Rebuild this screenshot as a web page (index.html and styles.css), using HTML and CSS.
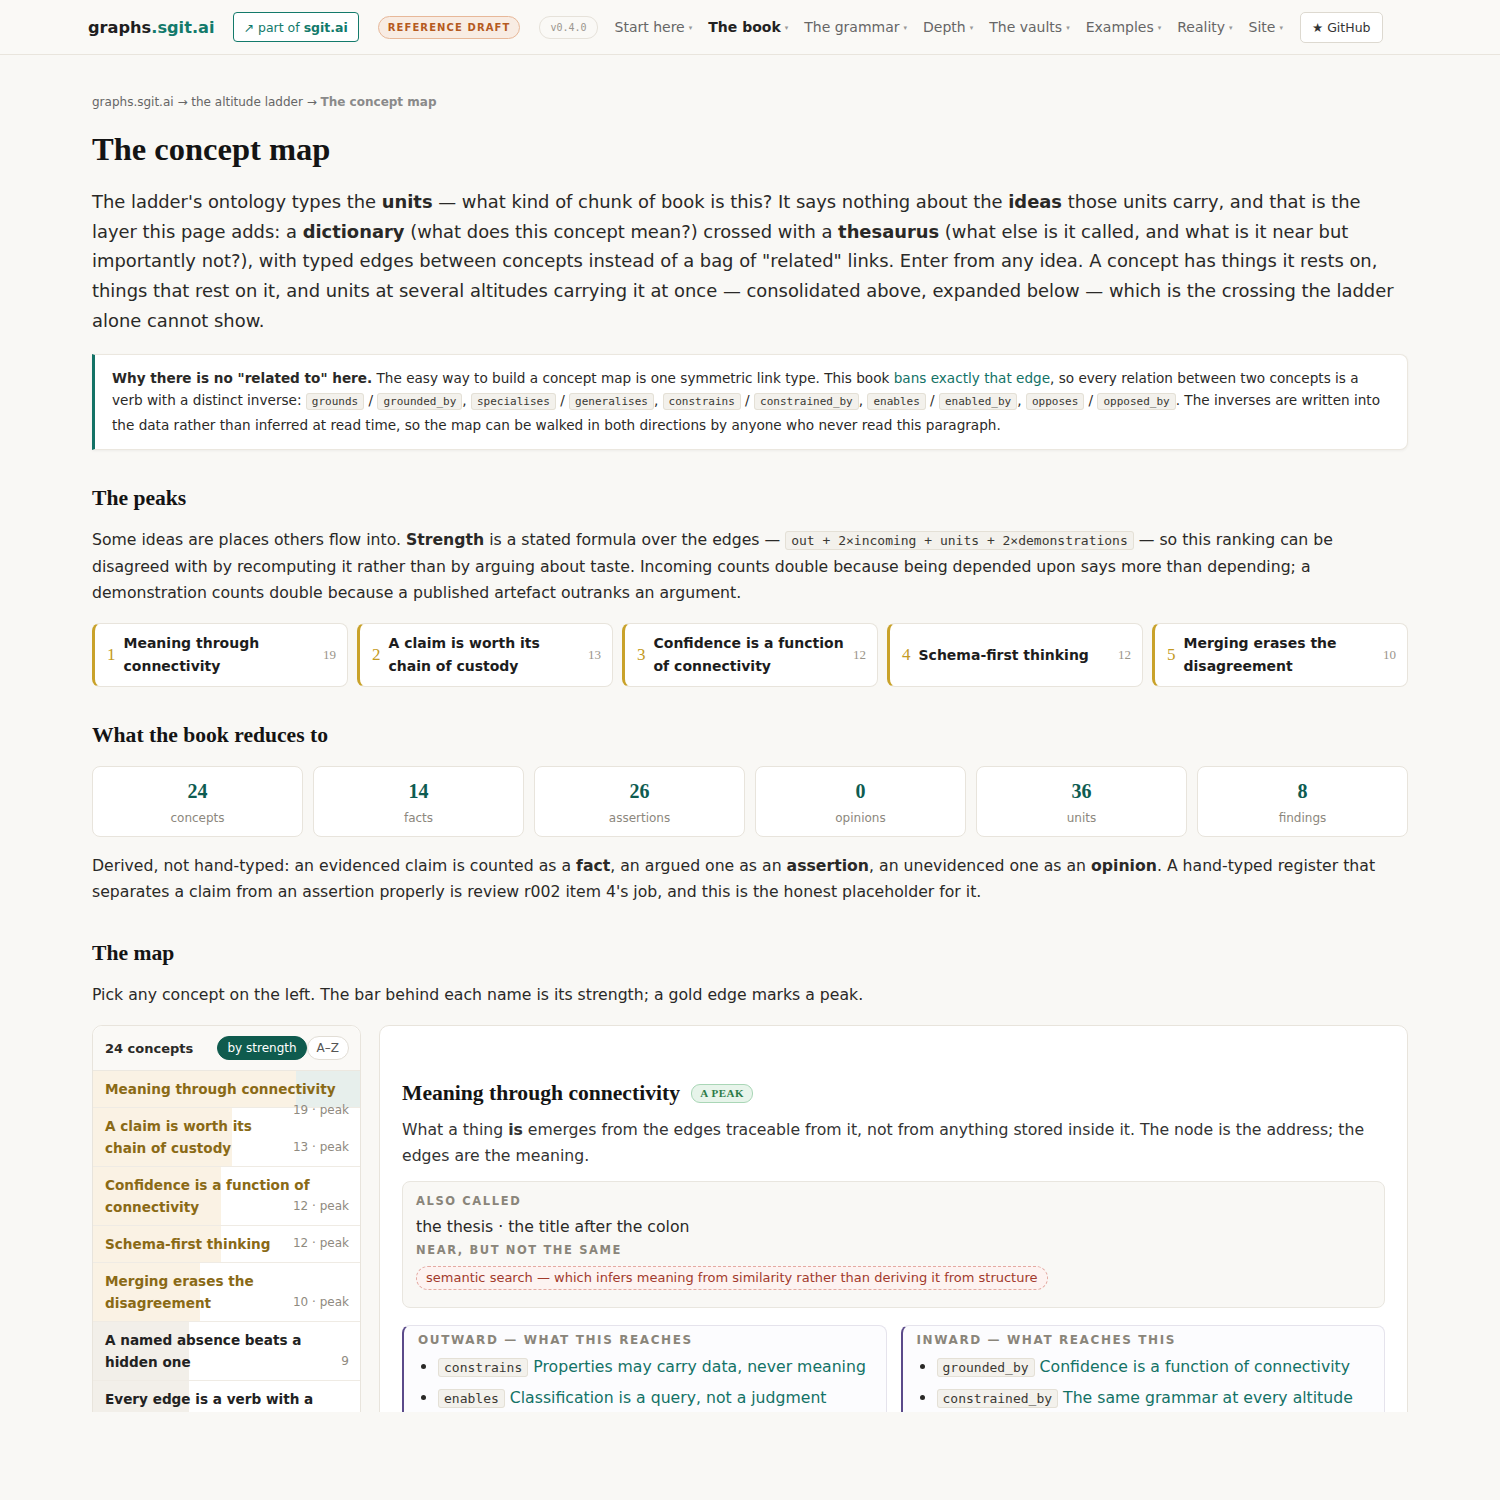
FILE: index.html
```html
<!DOCTYPE html>
<html lang="en">

<head>
  <meta charset="UTF-8">
  <meta name="viewport" content="width=device-width, initial-scale=1.0">
  <title>The concept map · graphs.sgit.ai</title>
  <link rel="stylesheet" href="styles.css">
</head>

<body>
  <header class="topbar">
    <a class="brand" href="#">graphs<span>.sgit.ai</span></a>
    <a class="parent" href="#">↗ part of <b>sgit.ai</b></a>
    <span class="draft">REFERENCE DRAFT</span>
    <span class="version">v0.4.0</span>
    <nav class="menu">
      <a href="#">Start here<i>▾</i></a>
      <a href="#" class="on">The book<i>▾</i></a>
      <a href="#">The grammar<i>▾</i></a>
      <a href="#">Depth<i>▾</i></a>
      <a href="#">The vaults<i>▾</i></a>
      <a href="#">Examples<i>▾</i></a>
      <a href="#">Reality<i>▾</i></a>
      <a href="#">Site<i>▾</i></a>
    </nav>
    <a class="github" href="#">★ GitHub</a>
  </header>

  <main class="page">
    <p class="crumbs">graphs.sgit.ai → the altitude ladder → <b>The concept map</b></p>
    <h1>The concept map</h1>
    <p class="lead">The ladder's ontology types the <b>units</b> — what kind of chunk of book is this? It says nothing about the <b>ideas</b> those units carry, and that is the layer this page adds: a <b>dictionary</b> (what does this concept mean?) crossed with a <b>thesaurus</b> (what else is it called, and what is it near but importantly not?), with typed edges between concepts instead of a bag of "related" links. Enter from any idea. A concept has things it rests on, things that rest on it, and units at several altitudes carrying it at once — consolidated above, expanded below — which is the crossing the ladder alone cannot show.</p>

    <aside class="note">
      <b>Why there is no "related to" here.</b> The easy way to build a concept map is one symmetric link type. This book <a href="#">bans exactly that edge</a>, so every relation between two concepts is a verb with a distinct inverse: <code>grounds</code> / <code>grounded_by</code>, <code>specialises</code> / <code>generalises</code>, <code>constrains</code> / <code>constrained_by</code>, <code>enables</code> / <code>enabled_by</code>, <code>opposes</code> / <code>opposed_by</code>. The inverses are written into the data rather than inferred at read time, so the map can be walked in both directions by anyone who never read this paragraph.
    </aside>

    <h2>The peaks</h2>
    <p>Some ideas are places others flow into. <b>Strength</b> is a stated formula over the edges — <code class="formula">out + 2×incoming + units + 2×demonstrations</code> — so this ranking can be disagreed with by recomputing it rather than by arguing about taste. Incoming counts double because being depended upon says more than depending; a demonstration counts double because a published artefact outranks an argument.</p>

    <ol class="peaks">
      <li><span class="rank">1</span><span class="name">Meaning through connectivity</span><span class="score">19</span></li>
      <li><span class="rank">2</span><span class="name">A claim is worth its chain of custody</span><span class="score">13</span></li>
      <li><span class="rank">3</span><span class="name">Confidence is a function of connectivity</span><span class="score">12</span></li>
      <li><span class="rank">4</span><span class="name">Schema-first thinking</span><span class="score">12</span></li>
      <li><span class="rank">5</span><span class="name">Merging erases the disagreement</span><span class="score">10</span></li>
    </ol>

    <h2>What the book reduces to</h2>
    <div class="stats">
      <div class="stat"><strong>24</strong><span>concepts</span></div>
      <div class="stat"><strong>14</strong><span>facts</span></div>
      <div class="stat"><strong>26</strong><span>assertions</span></div>
      <div class="stat"><strong>0</strong><span>opinions</span></div>
      <div class="stat"><strong>36</strong><span>units</span></div>
      <div class="stat"><strong>8</strong><span>findings</span></div>
    </div>
    <p>Derived, not hand-typed: an evidenced claim is counted as a <b>fact</b>, an argued one as an <b>assertion</b>, an unevidenced one as an <b>opinion</b>. A hand-typed register that separates a claim from an assertion properly is review r002 item 4's job, and this is the honest placeholder for it.</p>

    <h2>The map</h2>
    <p>Pick any concept on the left. The bar behind each name is its strength; a gold edge marks a peak.</p>

    <section class="map">
      <div class="index">
        <div class="index-head">
          <b>24 concepts</b>
          <div class="sort">
            <button class="active">by strength</button>
            <button>A–Z</button>
          </div>
        </div>
        <ul class="concepts">
          <!-- bar width = strength × 4% -->
          <li class="peak current" style="--w:76%">Meaning through connectivity<span class="meta">19 · peak</span></li>
          <li class="peak" style="--w:52%">A claim is worth its chain of custody<span class="meta">13 · peak</span></li>
          <li class="peak" style="--w:48%">Confidence is a function of connectivity<span class="meta">12 · peak</span></li>
          <li class="peak" style="--w:48%">Schema-first thinking<span class="meta">12 · peak</span></li>
          <li class="peak" style="--w:40%">Merging erases the disagreement<span class="meta">10 · peak</span></li>
          <li style="--w:36%">A named absence beats a hidden one<span class="meta">9</span></li>
          <li style="--w:36%">Every edge is a verb with a distinct inverse<span class="meta">9</span></li>
          <li style="--w:32%">Properties may carry data, never meaning<span class="meta">8</span></li>
        </ul>
      </div>

      <article class="concept">
        <h3>Meaning through connectivity <span class="badge">A PEAK</span></h3>
        <p>What a thing <b>is</b> emerges from the edges traceable from it, not from anything stored inside it. The node is the address; the edges are the meaning.</p>
        <div class="thesaurus">
          <h4>Also called</h4>
          <p>the thesis · the title after the colon</p>
          <h4>Near, but not the same</h4>
          <span class="not-same">semantic search — which infers meaning from similarity rather than deriving it from structure</span>
        </div>
        <div class="edges">
          <div class="edge-box">
            <h4>Outward — what this reaches</h4>
            <ul>
              <li><code>constrains</code> <a href="#">Properties may carry data, never meaning</a></li>
              <li><code>enables</code> <a href="#">Classification is a query, not a judgment</a></li>
              <li><code>grounds</code> <a href="#">A named absence beats a hidden one</a></li>
            </ul>
          </div>
          <div class="edge-box">
            <h4>Inward — what reaches this</h4>
            <ul>
              <li><code>grounded_by</code> <a href="#">Confidence is a function of connectivity</a></li>
              <li><code>constrained_by</code> <a href="#">The same grammar at every altitude</a></li>
              <li><code>enabled_by</code> <a href="#">Schema-first thinking</a></li>
            </ul>
          </div>
        </div>
      </article>
    </section>
  </main>
</body>

</html>
```

FILE: styles.css
```css
body {
  margin: 0;
  background: #f9f8f5;
  color: #2a2927;
  font-family: "DejaVu Sans", "Noto Sans", sans-serif;
}

a {
  color: inherit;
  text-decoration: none;
}

code {
  font-family: "DejaVu Sans Mono", monospace;
  background: #f3f1ec;
  border: 1px solid #e4e0d6;
  border-radius: 3px;
  color: #3a3833;
}

/* top bar */
.topbar {
  display: flex;
  align-items: center;
  height: 54px;
  padding-left: 88px;
  border-bottom: 1px solid #e9e5dd;
  background: #faf9f6;
}

.brand {
  font-size: 16.2px;
  font-weight: bold;
  color: #1f1f1f;
  margin-right: 18px;
}

.brand span {
  color: #137a6b;
}

.parent {
  display: flex;
  align-items: center;
  height: 28px;
  padding: 0 10px;
  border: 1px solid #137a6b;
  border-radius: 4px;
  font-size: 12.5px;
  color: #137a6b;
  background: #fff;
  margin-right: 19px;
}

.parent b {
  margin-left: 4px;
}

.draft {
  display: flex;
  align-items: center;
  height: 21px;
  padding: 0 9px;
  border: 1px solid #e7b899;
  border-radius: 12px;
  background: #f8ece3;
  color: #b55a1f;
  font-size: 10px;
  font-weight: bold;
  letter-spacing: 1.1px;
  margin-right: 19px;
}

.version {
  display: flex;
  align-items: center;
  height: 21px;
  padding: 0 10px;
  border: 1px solid #e6e2da;
  border-radius: 11px;
  font-family: "DejaVu Sans Mono", monospace;
  font-size: 10px;
  color: #9a968e;
  margin-right: 17px;
}

.menu {
  display: flex;
  gap: 16px;
  font-size: 14px;
  color: #666;
}

.menu a.on {
  font-weight: bold;
  color: #222;
}

.menu i {
  font-style: normal;
  font-size: 7px;
  color: #999;
  margin-left: 4px;
  vertical-align: 2px;
}

.github {
  display: flex;
  align-items: center;
  height: 29px;
  padding: 0 11px;
  margin-left: 17px;
  border: 1px solid #ddd9d0;
  border-radius: 5px;
  background: #fff;
  font-size: 12.5px;
  color: #333;
}

/* page body */
.page {
  max-width: 1316px;
  margin: 0 auto;
  padding-top: 37px;
}

.page p {
  margin: 0 0 17px;
  font-size: 15.7px;
  line-height: 26px;
}

.page b {
  font-weight: bold;
}

.page .crumbs {
  font-size: 12px;
  line-height: 20px;
  color: #666;
}

.crumbs b {
  color: #8a8a8a;
}

h1, h2, h3 {
  font-family: "Liberation Serif", serif;
  font-weight: bold;
  color: #141414;
}

h1 {
  font-size: 32.5px;
  line-height: 41px;
  margin: 0 0 17px;
}

h2 {
  font-size: 21.6px;
  line-height: 29px;
  margin: 34px 0 14px;
}

.page .lead {
  font-size: 17.9px;
  line-height: 29.7px;
  margin-bottom: 18px;
}

.note {
  background: #fff;
  border: 1px solid #ebe7df;
  border-left: 3px solid #137266;
  border-radius: 0 8px 8px 0;
  box-shadow: 0 1px 3px rgba(0, 0, 0, 0.05);
  padding: 12px 18px 13px 17px;
  font-size: 13.6px;
  line-height: 22.5px;
}

.note a {
  color: #137266;
}

.note code {
  font-size: 11px;
  padding: 1px 5px;
}

.formula {
  font-size: 13px;
  padding: 1px 5px;
}

/* peaks */
.peaks {
  list-style: none;
  padding: 0;
  margin: 15px 0 0;
  display: grid;
  grid-template-columns: repeat(5, 1fr);
  gap: 9px;
}

.peaks li {
  display: flex;
  align-items: center;
  gap: 8px;
  height: 64px;
  box-sizing: border-box;
  padding: 0 11px 0 12px;
  background: #fff;
  border: 1px solid #e8e4dc;
  border-left: 3px solid #c9a22a;
  border-radius: 8px;
}

.peaks .rank {
  font-family: "Liberation Serif", serif;
  font-size: 17px;
  color: #c49a22;
}

.peaks .name {
  flex: 1;
  font-size: 14px;
  font-weight: bold;
  line-height: 23px;
  color: #1d1d1d;
}

.peaks .score {
  font-family: "Liberation Serif", serif;
  font-size: 13px;
  color: #9a958b;
}

/* counts */
.stats {
  display: grid;
  grid-template-columns: repeat(6, 1fr);
  gap: 10px;
  margin: 16px 0 16px;
}

.stat {
  display: flex;
  flex-direction: column;
  align-items: center;
  height: 71px;
  box-sizing: border-box;
  padding-top: 12px;
  background: #fff;
  border: 1px solid #e8e4dc;
  border-radius: 8px;
}

.stat strong {
  font-family: "Liberation Serif", serif;
  font-size: 20px;
  line-height: 24px;
  color: #0e5c51;
}

.stat span {
  margin-top: 8px;
  font-size: 12px;
  color: #8c877d;
}

/* the map */
.map {
  display: grid;
  grid-template-columns: 269px 1fr;
  gap: 18px;
  height: 387px;
  overflow: hidden;
}

.index {
  background: #fff;
  border: 1px solid #e8e4dc;
  border-radius: 10px;
}

.index-head {
  display: flex;
  align-items: center;
  justify-content: space-between;
  height: 44px;
  padding: 0 11px 0 12px;
  background: #faf9f6;
  border-bottom: 1px solid #ece8e0;
  border-radius: 10px 10px 0 0;
  font-size: 13px;
}

.sort {
  display: flex;
}

.sort button {
  font-family: inherit;
  font-size: 12px;
  height: 24px;
  padding: 0 9px;
  border: 1px solid #e2ded6;
  border-radius: 12px;
  background: #fff;
  color: #555;
}

.sort button.active {
  background: #0f5b4e;
  border-color: #0f5b4e;
  color: #fff;
}

.concepts {
  list-style: none;
  margin: 0;
  padding: 0;
}

.concepts li {
  --bar: #f2efe9;
  padding: 7px 11px 7px 12px;
  border-top: 1px solid #efebe4;
  font-size: 13.6px;
  font-weight: bold;
  line-height: 22px;
  color: #222;
  background: linear-gradient(90deg, var(--bar) var(--w), transparent var(--w));
}

.concepts li:first-child {
  border-top: none;
}

.concepts li.peak {
  --bar: #faf2e4;
  color: #8a6a16;
}

.concepts li.current {
  background-color: #e7efec;
}

.concepts .meta {
  float: right;
  margin: 2px 0 0 8px;
  font-size: 12px;
  font-weight: normal;
  line-height: 16px;
  color: #8f8a80;
}

.concept {
  background: #fff;
  border: 1px solid #e8e4dc;
  border-radius: 10px;
  padding: 0 22px;
}

h3 {
  font-size: 21.6px;
  line-height: 30px;
  margin: 52px 0 9px;
}

.badge {
  display: inline-block;
  vertical-align: 3px;
  margin-left: 6px;
  padding: 0 8px;
  line-height: 17px;
  border: 1px solid #a9d6b6;
  border-radius: 9px;
  background: #e7f4ea;
  color: #2d7a47;
  font-size: 11px;
  letter-spacing: 0.5px;
}

.concept > p {
  color: #333;
}

.thesaurus {
  background: #f9f8f5;
  border: 1px solid #e9e6df;
  border-radius: 8px;
  padding: 11px 13px 17px;
  margin-top: -5px;
}

h4 {
  margin: 0;
  font-size: 11.5px;
  line-height: 16px;
  letter-spacing: 1.6px;
  text-transform: uppercase;
  color: #8a857a;
}

.page .thesaurus p {
  margin: 6px 0 3px;
  line-height: 24px;
}

.not-same {
  display: inline-block;
  margin-top: 8px;
  padding: 0 9px;
  line-height: 22px;
  border: 1px dashed #e4aaa2;
  border-radius: 12px;
  background: #fdf3f1;
  color: #a23a2c;
  font-size: 13px;
}

.edges {
  display: grid;
  grid-template-columns: 1fr 1fr;
  gap: 14px;
  margin-top: 17px;
}

.edge-box {
  border: 1px solid #e5e3ec;
  border-left: 2px solid #5b4a8a;
  border-radius: 8px;
  background: #fcfcfe;
  padding: 6px 14px;
}

.edge-box h4 {
  font-size: 12px;
}

.edge-box ul {
  margin: 4px 0 0;
  padding-left: 20px;
}

.edge-box li {
  font-size: 15.7px;
  line-height: 30px;
}

.edge-box code {
  font-size: 13px;
  padding: 1px 5px;
}

.edge-box a {
  color: #137266;
}
```
